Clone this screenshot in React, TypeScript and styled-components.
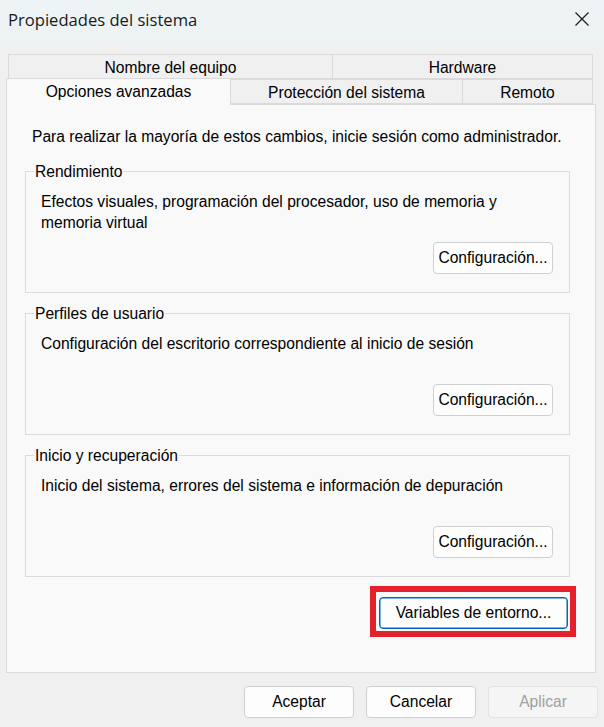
import React from 'react'
import styled, { createGlobalStyle } from 'styled-components'

const GlobalStyle = createGlobalStyle`
    html, body {
        margin: 0;
        padding: 0;
        background: #f0f0f0;
    }
    * {
        box-sizing: border-box;
    }
`

const FONT = '"Liberation Sans", Arial, sans-serif'

const Window = styled.div`
    width: 604px;
    height: 727px;
    display: flex;
    flex-direction: column;
    background: #f0f0f0;
    font-family: ${FONT};
    font-size: 15.6px;
    color: #000;
    overflow: hidden;
`

const TitleBar = styled.div`
    height: 42px;
    flex: none;
    display: flex;
    align-items: center;
    justify-content: space-between;
    padding: 0 14px 0 8px;
    background: linear-gradient(#eef4f5, #edf2f3);
`

const Title = styled.div`
    font-family: "Open Sans", "Noto Sans", sans-serif;
    font-size: 16.6px;
    color: #1a1a1a;
    margin-top: -4px;
`

const CloseButton = styled.div`
    width: 16px;
    height: 16px;
    display: flex;
    margin-top: -4px;
`

const Body = styled.div`
    padding: 12px 8px 0 6px;
    display: flex;
    flex-direction: column;
`

const TabRow = styled.div<{ $indent: number }>`
    display: flex;
    align-items: flex-end;
    margin-left: ${p => p.$indent}px;
    width: ${p => 587 - p.$indent}px;
`

const Tab = styled.div<{ $width: number; $active?: boolean }>`
    width: ${p => p.$width}px;
    flex: none;
    height: ${p => (p.$active ? 27 : 25)}px;
    margin-bottom: ${p => (p.$active ? -1 : 0)}px;
    display: flex;
    align-items: center;
    justify-content: center;
    border: 1px solid #dadada;
    border-left-width: ${p => (p.$active ? 1 : 0)}px;
    border-bottom: ${p => (p.$active ? 'none' : '1px solid #dadada')};
    background: ${p => (p.$active ? '#f9f9f9' : '#f0f0f0')};
    position: relative;
    z-index: ${p => (p.$active ? 2 : 0)};
    padding-top: ${p => (p.$active ? 0 : 2)}px;

    &:first-child {
        border-left-width: 1px;
    }
`

const BackRow = styled(TabRow)`
    height: 24px;
    & > ${Tab} {
        height: 25px;
        margin-bottom: -1px;
        padding-top: 3px;
    }
`

const Panel = styled.div`
    width: 590px;
    height: 569px;
    background: #f9f9f9;
    border: 1px solid #dadada;
    padding: 21px 25px 0 18px;
    display: flex;
    flex-direction: column;
    position: relative;
    z-index: 1;
`

const Intro = styled.p`
    margin: 0 0 14px 7px;
    line-height: 21px;
    white-space: nowrap;
`

const Group = styled.fieldset`
    margin: 0 0 10px 0;
    padding: 0 16px 18px 15px;
    border: 1px solid #dcdcdc;
    display: flex;
    flex-direction: column;
    min-width: 0;
`

const Legend = styled.legend`
    padding: 0 1px;
    margin-left: -7px;
    line-height: 21px;
    height: 21px;
`

const GroupText = styled.div`
    margin-top: 9px;
    min-height: 42px;
    line-height: 21px;
`

const Button = styled.button<{ $width?: number; $default?: boolean }>`
    height: 32px;
    width: ${p => (p.$width ? `${p.$width}px` : 'auto')};
    padding: 0 4px;
    font-family: ${FONT};
    font-size: 15.6px;
    color: #000;
    background: #fdfdfd;
    border: 1px solid ${p => (p.$default ? '#0067c0' : '#d0d0d0')};
    border-radius: 4px;
    box-shadow: ${p => (p.$default ? 'inset 0 0 0 0.5px #0067c0' : 'none')};
    white-space: nowrap;

    &:disabled {
        color: #a0a0a0;
        background: #f5f5f5;
        border-color: #e2e2e2;
    }
`

const GroupButton = styled(Button)`
    margin-top: 9px;
    align-self: flex-end;
    width: 120px;
`

const Highlight = styled.div`
    align-self: flex-end;
    margin: -1px -6px 0 0;
    border: 6px solid #e4202a;
    padding: 5px 2px 2px 3px;
    display: flex;
`

const Footer = styled.div`
    display: flex;
    justify-content: flex-end;
    gap: 12px;
    padding-top: 13px;
    margin-right: -2px;
`

const GROUPS = [
    {
        title: 'Rendimiento',
        text: 'Efectos visuales, programación del procesador, uso de memoria y memoria virtual'
    },
    {
        title: 'Perfiles de usuario',
        text: 'Configuración del escritorio correspondiente al inicio de sesión'
    },
    {
        title: 'Inicio y recuperación',
        text: 'Inicio del sistema, errores del sistema e información de depuración'
    }
]

const App = () => {
    return (
        <>
            <GlobalStyle />
            <Window>
                <TitleBar>
                    <Title>Propiedades del sistema</Title>
                    <CloseButton>
                        <svg width="16" height="16" viewBox="0 0 16 16">
                            <path d="M1.5 1.5 L14.5 14.5 M14.5 1.5 L1.5 14.5" stroke="#1a1a1a" strokeWidth="1.2" fill="none" />
                        </svg>
                    </CloseButton>
                </TitleBar>
                <Body>
                    <BackRow $indent={2}>
                        <Tab $width={325}>Nombre del equipo</Tab>
                        <Tab $width={260}>Hardware</Tab>
                    </BackRow>
                    <TabRow $indent={0}>
                        <Tab $width={225} $active>Opciones avanzadas</Tab>
                        <Tab $width={232}>Protección del sistema</Tab>
                        <Tab $width={130}>Remoto</Tab>
                    </TabRow>
                    <Panel>
                        <Intro>Para realizar la mayoría de estos cambios, inicie sesión como administrador.</Intro>
                        {GROUPS.map(g => (
                            <Group key={g.title}>
                                <Legend>{g.title}</Legend>
                                <GroupText>{g.text}</GroupText>
                                <GroupButton>Configuración...</GroupButton>
                            </Group>
                        ))}
                        <Highlight>
                            <Button $default $width={189}>Variables de entorno...</Button>
                        </Highlight>
                    </Panel>
                    <Footer>
                        <Button $width={110}>Aceptar</Button>
                        <Button $width={110}>Cancelar</Button>
                        <Button $width={110} disabled>Aplicar</Button>
                    </Footer>
                </Body>
            </Window>
        </>
    )
}

export default App
